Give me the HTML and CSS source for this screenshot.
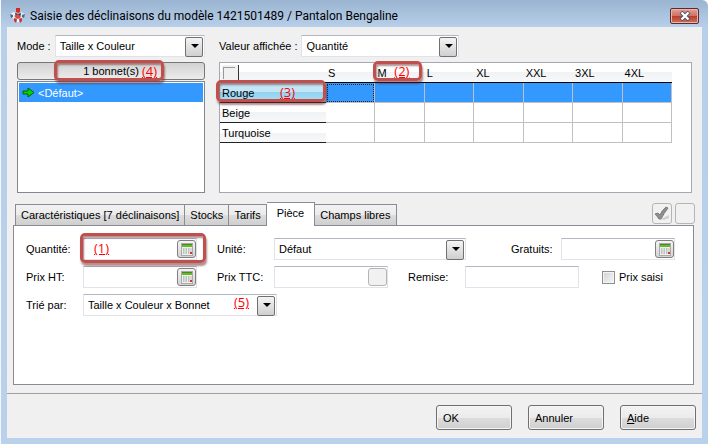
FILE: index.html
```html
<!DOCTYPE html>
<html lang="fr">
<head>
    <meta charset="UTF-8">
    <meta name="viewport" content="width=device-width, initial-scale=1.0">
    <title>Saisie des déclinaisons du modèle</title>
    <link rel="stylesheet" href="styles.css">
</head>
<body>
    <svg width="0" height="0" class="defs" aria-hidden="true">
        <symbol id="calc" viewBox="0 0 12 13">
            <rect x="0.5" y="0.5" width="11" height="12" fill="#eef0ee" stroke="#a9a9a9"/>
            <rect x="1" y="1" width="10" height="3" fill="#6cb52d"/>
            <path d="M1 1.5h10" stroke="#3f8f1d"/>
            <path d="M2 6h1.5M4.500 6H6M7 6h1.500M9.500 6h1M2 8h1.500M4.500 8H6M7 8h1.500M9.500 8h1M2 10h1.500M4.500 10H6M7 10h1.500" stroke="#8d9691"/>
            <rect x="9" y="9" width="2" height="2" fill="#e03028"/>
        </symbol>
    </svg>
    <div class="window">
        <header class="titlebar">
            <svg class="app-icon" width="17" height="17" viewBox="0 0 17 17">
                <path d="M1 7l4-2 3 3-3 4-3-2z" fill="#eef2f8"/>
                <path d="M16 7l-4-2-3 3 3 4 3-2z" fill="#dfe6ef"/>
                <path d="M1 7l3 1v2l-2 1zM16 7l-3 1v2l2 1z" fill="#54657c"/>
                <path d="M7 1h4v4l-2 1-2-1z" fill="#d92a20"/>
                <path d="M6 6l3 1 3-1-1 5H7z" fill="#2c3d58"/>
                <path d="M5 9l4-2 3 3-3 2z" fill="#e8483e"/>
                <path d="M5 11l3 1-1 4-2-2zM13 11l-3 1 1 4 2-2z" fill="#c9362e"/>
                <path d="M8 12h2v3H8z" fill="#f4f7fb"/>
            </svg>
            <h1>Saisie des déclinaisons du modèle 1421501489 / Pantalon Bengaline</h1>
            <button class="close" aria-label="Fermer">
                <svg width="12" height="10" viewBox="0 0 12 10">
                    <path d="M2 1l8 8M10 1L2 9" stroke="#4a4f66" stroke-width="4"/>
                    <path d="M2.500 1.500l7 7M9.500 1.500l-7 7" stroke="#fff" stroke-width="2.400"/>
                </svg>
            </button>
        </header>
        <main class="client">
            <div class="top">
                <section class="models">
                    <div class="line">
                        <label for="mode">Mode :</label>
                        <span class="combo grow"><select id="mode"><option>Taille x Couleur</option></select></span>
                    </div>
                    <div class="marked">
                        <button class="bonnets">1 bonnet(s)</button>
                        <span class="callout callout-bonnets"><span class="note">(4)</span></span>
                    </div>
                    <ul class="list">
                        <li>
                            <svg width="13" height="11" viewBox="0 0 13 11">
                                <path d="M1 4h5V1l6 4.500L6 10V7H1z" fill="#00d800" stroke="#075c07"/>
                            </svg>
                            &lt;Défaut&gt;
                        </li>
                    </ul>
                </section>
                <section class="values">
                    <div class="line">
                        <label for="valeur">Valeur affichée :</label>
                        <span class="combo combo-value"><select id="valeur"><option>Quantité</option></select></span>
                    </div>
                    <div class="grid-box">
                        <table>
                            <thead>
                                <tr>
                                    <th class="corner"><span class="corner-box"></span></th>
                                    <th>S</th>
                                    <th class="marked">M<span class="callout callout-size"><span class="note">(2)</span></span></th>
                                    <th>L</th>
                                    <th>XL</th>
                                    <th>XXL</th>
                                    <th>3XL</th>
                                    <th>4XL</th>
                                </tr>
                            </thead>
                            <tbody>
                                <tr class="selected">
                                    <th class="marked">Rouge<span class="callout callout-color"><span class="note">(3)</span></span></th>
                                    <td class="focus"></td><td></td><td></td><td></td><td></td><td></td><td></td>
                                </tr>
                                <tr>
                                    <th>Beige</th>
                                    <td></td><td></td><td></td><td></td><td></td><td></td><td></td>
                                </tr>
                                <tr>
                                    <th>Turquoise</th>
                                    <td></td><td></td><td></td><td></td><td></td><td></td><td></td>
                                </tr>
                            </tbody>
                        </table>
                    </div>
                </section>
            </div>

            <div class="tabs">
                <button class="tab">Caractéristiques [7 déclinaisons]</button>
                <button class="tab">Stocks</button>
                <button class="tab">Tarifs</button>
                <button class="tab active">Pièce</button>
                <button class="tab">Champs libres</button>
                <div class="tools">
                    <button class="tool" aria-label="Valider" disabled>
                        <svg width="16" height="15" viewBox="0 0 16 15">
                            <path d="M7 13l8-4v3l-5 2z" fill="#cfcfcf"/>
                            <path d="M1 8l3-1 2 2q2-5 6-8l2 1Q10 7 7 13H5Q3 10 1 8z" fill="#8f8f8f" stroke="#7c7c7c"/>
                        </svg>
                    </button>
                    <button class="tool" aria-label="Annuler la saisie" disabled></button>
                </div>
            </div>
            <form class="pane">
                <div class="row">
                    <label for="quantite">Quantité:</label>
                    <span class="field marked">
                        <input type="text" id="quantite">
                        <button type="button" class="calc" aria-label="Calculatrice"><svg width="12" height="13"><use href="#calc"/></svg></button>
                        <span class="callout callout-quantity"><span class="note">(1)</span></span>
                    </span>
                    <label for="unite" class="next">Unité:</label>
                    <span class="combo combo-unit"><select id="unite"><option>Défaut</option></select></span>
                    <label for="gratuits" class="free">Gratuits:</label>
                    <span class="field">
                        <input type="text" id="gratuits">
                        <button type="button" class="calc" aria-label="Calculatrice"><svg width="12" height="13"><use href="#calc"/></svg></button>
                    </span>
                </div>
                <div class="row">
                    <label for="prixht">Prix HT:</label>
                    <span class="field">
                        <input type="text" id="prixht">
                        <button type="button" class="calc" aria-label="Calculatrice"><svg width="12" height="13"><use href="#calc"/></svg></button>
                    </span>
                    <label for="prixttc" class="next">Prix TTC:</label>
                    <span class="field">
                        <input type="text" id="prixttc">
                        <button type="button" class="calc off" aria-label="Calculatrice" disabled></button>
                    </span>
                    <label for="remise" class="next">Remise:</label>
                    <span class="field"><input type="text" id="remise"></span>
                    <span class="check">
                        <input type="checkbox" id="saisi">
                        <label for="saisi">Prix saisi</label>
                    </span>
                </div>
                <div class="row">
                    <label for="tri">Trié par:</label>
                    <span class="combo combo-sort marked">
                        <select id="tri"><option>Taille x Couleur x Bonnet</option></select>
                        <span class="note note-sort">(5)</span>
                    </span>
                </div>
            </form>
            <footer class="actions">
                <button>OK</button>
                <button>Annuler</button>
                <button><u>A</u>ide</button>
            </footer>
        </main>
    </div>
</body>
</html>
```
FILE: styles.css
```css
* {
    box-sizing: border-box;
}

body {
    margin: 0;
    font: 11px/16px "Liberation Sans", Arial, sans-serif;
    color: #000;
}

button,
input,
select {
    margin: 0;
    font: inherit;
    color: inherit;
}

.defs {
    position: absolute;
}

.window {
    display: flex;
    flex-direction: column;
    min-height: 100vh;
    padding: 0 6px 6px;
    background: linear-gradient(#9ab4d1, #b7cfe9 27px, #b9d1ea);
    border-left: 1px solid #f4f8fc;
    border-radius: 0 6px 0 0;
}

.titlebar {
    display: flex;
    align-items: center;
    height: 27px;
    padding: 4px 3px 0 2px;
}

.titlebar h1 {
    flex: 1;
    margin: 0 0 0 4px;
    font: 12px/18px Roboto, "Noto Sans", sans-serif;
}

.close {
    display: flex;
    align-items: center;
    justify-content: center;
    width: 29px;
    height: 16px;
    padding: 0;
    border: 1px solid #5a2a35;
    border-radius: 2px;
    background: linear-gradient(#e0a196, #cf7263 48%, #b8402b 52%, #d0705a);
    box-shadow: inset 0 0 0 1px #e9b5ab;
}

.client {
    flex: 1;
    display: flex;
    flex-direction: column;
    padding-top: 8px;
    background: #f0f0f0;
}

.top {
    display: flex;
    gap: 14px;
    padding: 0 10px;
}

.models {
    display: flex;
    flex-direction: column;
    width: 188px;
}

.values {
    flex: 1;
}

.line {
    display: flex;
    align-items: center;
    gap: 4px;
    margin-bottom: 5px;
}

.grow {
    flex: 1;
}

/* Drop-down lists */
.combo {
    position: relative;
    display: block;
    height: 22px;
}

.combo select {
    display: block;
    width: 100%;
    height: 100%;
    padding: 0 20px 0 4px;
    appearance: none;
    border: 1px solid #e2e3ea;
    border-top-color: #b4b7bf;
    border-radius: 0;
    background: #fff;
}

.combo::before {
    content: "";
    position: absolute;
    top: 2px;
    right: 2px;
    width: 16px;
    height: 18px;
    border: 1px solid #707070;
    border-radius: 2px;
    background: linear-gradient(#f4f4f4, #cfcfcf);
    pointer-events: none;
}

.combo::after {
    content: "";
    position: absolute;
    top: 9px;
    right: 6px;
    border: 4px solid transparent;
    border-top-color: #000;
    border-bottom: 0;
    pointer-events: none;
}

.combo-value {
    width: 158px;
}

.combo-unit {
    width: 192px;
}

.combo-sort {
    width: 194px;
}

/* Red marks and their numbers */
.marked {
    position: relative;
}

.callout {
    position: absolute;
    z-index: 1;
    border: 3px solid #c0504d;
    border-radius: 5px;
    box-shadow: 1px 3px 2px rgba(100, 30, 30, 0.5), inset 1px 2px 2px rgba(100, 30, 30, 0.5);
    pointer-events: none;
}

.note {
    position: absolute;
    z-index: 2;
    font: 13px/16px "Open Sans", "Noto Sans", sans-serif;
    color: #f00;
    text-decoration: underline;
}

.callout-bonnets {
    top: -2px;
    left: 37px;
    width: 110px;
    height: 21px;
}

.callout-bonnets .note {
    top: 0;
    right: 4px;
}

.callout-size {
    top: -2px;
    left: -2px;
    width: 49px;
    height: 20px;
}

.callout-size .note {
    top: -1px;
    right: 10px;
}

.callout-color {
    top: -3px;
    left: -4px;
    width: 110px;
    height: 22px;
}

.callout-color .note {
    top: 1px;
    right: 28px;
}

.callout-quantity {
    top: -5px;
    left: -3px;
    width: 126px;
    height: 30px;
}

.callout-quantity .note {
    top: 4px;
    left: 11px;
}

.note-sort {
    top: 0;
    right: 28px;
}

.bonnets {
    display: block;
    width: 100%;
    height: 18px;
    padding: 0;
    border: 1px solid #777;
    border-radius: 3px;
    background: linear-gradient(#d2d2d2, #ececec);
}

.list {
    flex: 1;
    margin: 1px 0 0;
    padding: 1px;
    list-style: none;
    border: 1px solid #828790;
    background: #fff;
}

.list li {
    display: flex;
    align-items: center;
    gap: 3px;
    height: 19px;
    padding-left: 3px;
    background: #3399ff;
    color: #fff;
}

/* Sizes by colours */
.grid-box {
    height: 131px;
    border: 1px solid #a5a8b0;
    background: #fff;
}

table {
    width: 452px;
    table-layout: fixed;
    border-collapse: separate;
    border-spacing: 0;
}

th,
td {
    height: 20px;
    padding: 0 0 0 2px;
    font-weight: normal;
    line-height: 16px;
    text-align: left;
}

th {
    background: linear-gradient(#fff 50%, #f1f2f4 50%, #f7f8fa);
}

thead th {
    border-bottom: 1px solid #000;
}

.corner {
    width: 106px;
}

.corner-box {
    display: block;
    width: 17px;
    height: 16px;
    border-right: 1px solid #333;
    background: linear-gradient(#999, #999) 1px 2px / 12px 1px no-repeat, linear-gradient(#999, #999) 1px 2px / 1px 12px no-repeat, #f1f1f1;
}

tbody th {
    border-bottom: 1px solid #222;
}

td {
    border-right: 1px solid #c0c0c0;
    border-bottom: 1px solid #c0c0c0;
}

.selected td {
    background: #3399ff;
}

.selected th {
    background: linear-gradient(#c2e6f6 50%, #94d3f0 50%, #a9def5);
}

.selected .focus {
    outline: 1px dotted #222;
    outline-offset: -2px;
}

/* Tabs */
.tabs {
    display: flex;
    align-items: flex-end;
    height: 32px;
    padding: 0 7px 0 8px;
}

.tab {
    height: 21px;
    padding: 0 5px;
    border: 1px solid #898c95;
    border-bottom: 0;
    border-left-width: 0;
    background: linear-gradient(#f2f2f2, #ebebeb 50%, #dddddd 50%, #cfcfcf);
    white-space: nowrap;
}

.tab:first-child {
    border-left-width: 1px;
}

.tab.active {
    z-index: 1;
    height: 24px;
    margin-bottom: -1px;
    padding: 0 10px 3px;
    background: #fff;
}

.tools {
    display: flex;
    gap: 3px;
    margin: 0 0 1px auto;
}

.tool {
    display: flex;
    align-items: center;
    justify-content: center;
    width: 20px;
    height: 21px;
    padding: 0;
    border: 1px solid #b5b5b5;
    border-radius: 3px;
    background: #f1f1f1;
}

.pane {
    flex: 1;
    display: flex;
    flex-direction: column;
    gap: 6px;
    margin: 0 8px 0 6px;
    padding: 12px;
    border: 1px solid #898c95;
    background: #fff;
}

.row {
    display: flex;
    align-items: center;
}

.row > label {
    width: 57px;
}

.row > .next {
    margin-left: 20px;
}

.row > .free {
    width: 50px;
    margin-left: 45px;
}

.field {
    display: block;
    position: relative;
    width: 114px;
    height: 22px;
}

.field input {
    display: block;
    width: 100%;
    height: 100%;
    padding: 0 22px 0 4px;
    border: 1px solid #e2e3ea;
    border-top-color: #b4b7bf;
    background: #fff;
}

.calc {
    position: absolute;
    top: 2px;
    right: 1px;
    display: flex;
    align-items: center;
    justify-content: center;
    width: 19px;
    height: 18px;
    padding: 0;
    border: 1px solid #808080;
    border-radius: 3px;
    background: linear-gradient(#f4f4f4, #d4d4d4);
}

.calc.off {
    border-color: #b5b5b5;
    background: #f1f1f1;
}

.check {
    display: flex;
    align-items: center;
    gap: 4px;
    margin-left: 23px;
}

.check input {
    width: 13px;
    height: 13px;
    appearance: none;
    border: 1px solid #8e8f8f;
    background: linear-gradient(135deg, #cfd3d8, #f6f6f6);
    box-shadow: inset 0 0 0 1px #f4f4f4;
}

.actions {
    display: flex;
    justify-content: flex-end;
    gap: 16px;
    margin-top: 8px;
    padding: 11px 6px 8px;
    border-top: 1px solid #a0a0a0;
}

.actions button {
    width: 76px;
    height: 25px;
    padding: 0 6px;
    border: 1px solid #707070;
    border-radius: 3px;
    background: linear-gradient(#f3f3f3, #ebebeb 50%, #dddddd 50%, #cfcfcf);
    box-shadow: inset 0 0 0 1px #f5f5f5;
    text-align: left;
}
```
